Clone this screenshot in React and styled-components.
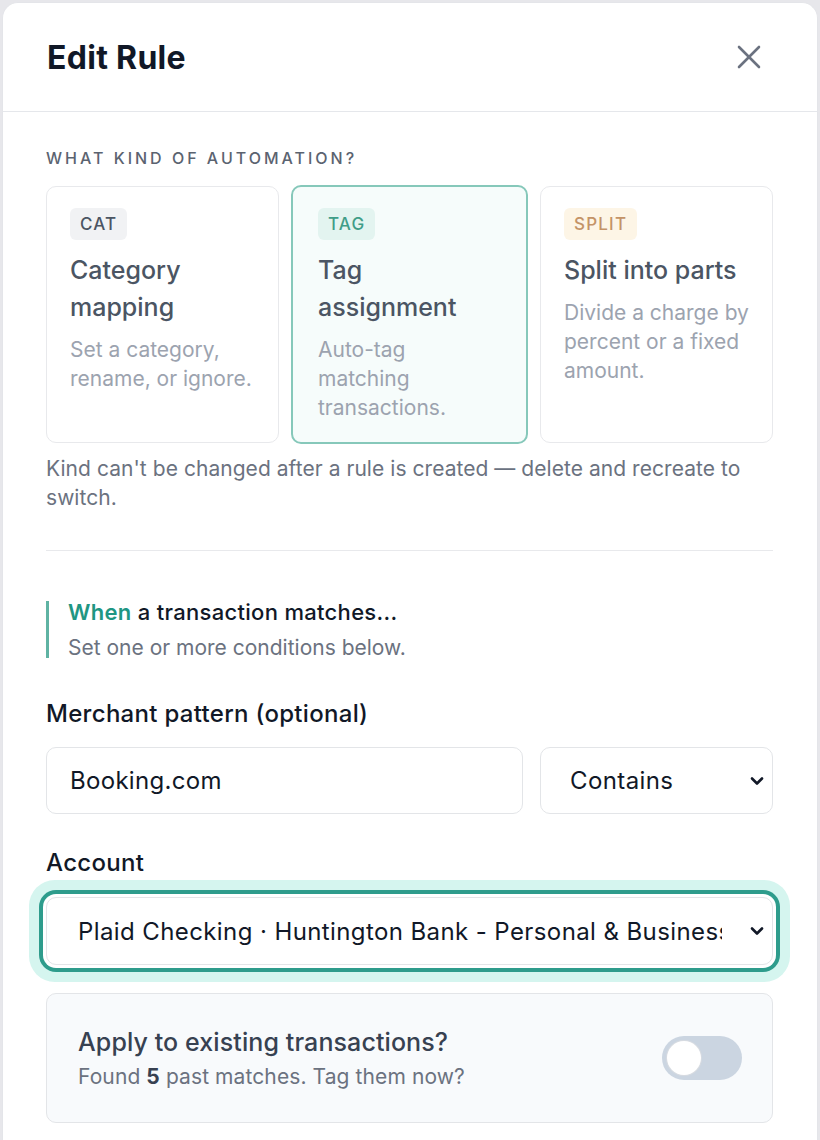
import React from 'react';
import styled, { createGlobalStyle } from 'styled-components';

const GlobalStyle = createGlobalStyle`
  html, body {
    margin: 0;
    padding: 0;
    background: #e7e7eb;
    font-family: Inter, "Noto Sans", Arial, sans-serif;
    -webkit-font-smoothing: antialiased;
  }
  * { box-sizing: border-box; }
`;

const kinds = [
  { code: 'CAT', tone: 'gray', title: 'Category mapping', desc: 'Set a category, rename, or ignore.' },
  { code: 'TAG', tone: 'teal', title: 'Tag assignment', desc: 'Auto-tag matching transactions.', selected: true },
  { code: 'SPLIT', tone: 'amber', title: 'Split into parts', desc: 'Divide a charge by percent or a fixed amount.' },
];

const badgeTones = {
  gray: { bg: '#f1f2f4', fg: '#4b5563' },
  teal: { bg: '#e3f4f0', fg: '#3f9d88' },
  amber: { bg: '#fdf5e6', fg: '#c49367' },
};

const App = () => {
  return (
    <>
      <GlobalStyle />
      <Modal>
        <Header>
          <Title>Edit Rule</Title>
          <CloseButton aria-label="Close">
            <svg width="24" height="24" viewBox="0 0 24 24" fill="none" stroke="#6b7280" strokeWidth="2.6" strokeLinecap="round">
              <line x1="2" y1="2" x2="22" y2="22" />
              <line x1="22" y1="2" x2="2" y2="22" />
            </svg>
          </CloseButton>
        </Header>

        <Body>
          <SectionLabel>What kind of automation?</SectionLabel>
          <KindGrid>
            {kinds.map(k => (
              <KindCard key={k.code} $selected={k.selected}>
                <Badge $tone={k.tone}>{k.code}</Badge>
                <KindTitle>{k.title}</KindTitle>
                <KindDesc>{k.desc}</KindDesc>
              </KindCard>
            ))}
          </KindGrid>
          <Hint>Kind can't be changed after a rule is created — delete and recreate to switch.</Hint>

          <Divider />

          <StepBlock>
            <StepTitle>
              <Accent>When</Accent> a transaction matches...
            </StepTitle>
            <StepSub>Set one or more conditions below.</StepSub>
          </StepBlock>

          <FieldLabel $top={41}>Merchant pattern (optional)</FieldLabel>
          <MerchantRow>
            <TextInput defaultValue="Booking.com" />
            <SelectWrap>
              <Select defaultValue="contains">
                <option value="contains">Contains</option>
                <option value="exact">Exact</option>
              </Select>
              <Chevron />
            </SelectWrap>
          </MerchantRow>

          <FieldLabel $top={34}>Account</FieldLabel>
          <SelectWrap>
            <Select $focused defaultValue="plaid">
              <option value="plaid">Plaid Checking · Huntington Bank - Personal &amp; Business</option>
            </Select>
            <Chevron />
          </SelectWrap>

          <ApplyCard>
            <ApplyText>
              <ApplyTitle>Apply to existing transactions?</ApplyTitle>
              <ApplySub>
                Found <strong>5</strong> past matches. Tag them now?
              </ApplySub>
            </ApplyText>
            <Toggle role="switch" aria-checked="false">
              <Knob />
            </Toggle>
          </ApplyCard>
        </Body>
      </Modal>
    </>
  );
};

const Chevron = () => (
  <ChevronIcon width="14" height="10" viewBox="0 0 14 10" fill="none" stroke="#111827" strokeWidth="2.6" strokeLinecap="round" strokeLinejoin="round">
    <polyline points="2,2.5 7,7.5 12,2.5" />
  </ChevronIcon>
);

const Modal = styled.div`
  margin: 2px 2px 0;
  min-height: 1300px;
  background: #fff;
  border-radius: 16px 16px 0 0;
  border: 1px solid #e4e5e9;
  border-bottom: none;
`;

const Header = styled.header`
  display: flex;
  align-items: center;
  justify-content: space-between;
  height: 109px;
  padding: 0 46px 0 44px;
  border-bottom: 1px solid #e5e7eb;
`;

const Title = styled.h1`
  margin: 0;
  font-size: 32px;
  font-weight: 700;
  color: #111827;
  letter-spacing: 0.3px;
`;

const CloseButton = styled.button`
  display: flex;
  padding: 0;
  margin-right: 10px;
  border: none;
  background: none;
  cursor: pointer;
`;

const Body = styled.div`
  display: flex;
  flex-direction: column;
  padding: 36px 44px 60px 43px;
`;

const SectionLabel = styled.div`
  font-size: 16px;
  line-height: 20px;
  font-weight: 500;
  letter-spacing: 3px;
  text-transform: uppercase;
  color: #5b6370;
`;

const KindGrid = styled.div`
  display: grid;
  grid-template-columns: repeat(3, 1fr);
  gap: 14px;
  margin-top: 18px;
`;

const KindCard = styled.div`
  display: flex;
  flex-direction: column;
  align-items: flex-start;
  min-height: 257px;
  margin: ${p => (p.$selected ? '-1px -2px' : '0')};
  padding: ${p => (p.$selected ? '21px 26px 20px 25px' : '21px 21px 20px 23px')};
  border-radius: 10px;
  border: ${p => (p.$selected ? '2px solid #86c8ba' : '1px solid #e8e9ec')};
  background: ${p => (p.$selected ? '#f6fcfb' : '#fff')};
`;

const Badge = styled.span`
  display: inline-flex;
  align-items: center;
  height: 32px;
  padding: 0 10px;
  border-radius: 6px;
  font-size: 17px;
  font-weight: 500;
  letter-spacing: 1.2px;
  background: ${p => badgeTones[p.$tone].bg};
  color: ${p => badgeTones[p.$tone].fg};
`;

const KindTitle = styled.div`
  margin-top: 12px;
  font-size: 25px;
  line-height: 37px;
  font-weight: 500;
  color: #4b5563;
`;

const KindDesc = styled.div`
  margin-top: 9px;
  font-size: 21px;
  line-height: 29px;
  color: #9ca3af;
`;

const Hint = styled.p`
  margin: 11px 0 0;
  font-size: 21px;
  line-height: 29px;
  letter-spacing: 0.05px;
  color: #6b7280;
`;

const Divider = styled.hr`
  width: 100%;
  margin: 38px 0 0;
  border: none;
  border-top: 1px solid #e8e9ec;
`;

const StepBlock = styled.div`
  margin-top: 50px;
  padding-left: 19px;
  border-left: 3px solid #5fb3a3;
`;

const StepTitle = styled.div`
  font-size: 22px;
  line-height: 22px;
  font-weight: 500;
  letter-spacing: 0.3px;
  color: #111827;
`;

const Accent = styled.span`
  color: #1f9683;
  font-weight: 600;
`;

const StepSub = styled.div`
  margin-top: 15px;
  font-size: 21px;
  line-height: 20px;
  color: #6b7280;
`;

const FieldLabel = styled.label`
  display: block;
  margin-top: ${p => p.$top}px;
  font-size: 24px;
  line-height: 30px;
  font-weight: 500;
  letter-spacing: 0.3px;
  color: #111827;
`;

const MerchantRow = styled.div`
  display: grid;
  grid-template-columns: 1fr 233px;
  gap: 17px;
  margin-top: 18px;
`;

const TextInput = styled.input`
  width: 100%;
  height: 67px;
  padding: 0 23px;
  border: 1px solid #e3e5e8;
  border-radius: 10px;
  font-family: inherit;
  font-size: 24px;
  letter-spacing: 0.3px;
  color: #111827;
  background: #fff;
  outline: none;
`;

const SelectWrap = styled.div`
  position: relative;
  ${FieldLabel} + & {
    margin-top: 19px;
  }
`;

const Select = styled.select`
  appearance: none;
  width: 100%;
  height: ${p => (p.$focused ? '68px' : '67px')};
  padding: ${p => (p.$focused ? '0 50px 0 31px' : '0 50px 0 29px')};
  border: 1px solid #e3e5e8;
  border-radius: 10px;
  font-family: inherit;
  font-size: 24px;
  letter-spacing: 0.4px;
  color: #111827;
  background: #fff;
  outline: none;
  box-shadow: ${p =>
    p.$focused ? '0 0 0 3px #fff, 0 0 0 7px #2e9c8c, 0 0 0 17px #d5f5ef' : 'none'};
`;

const ChevronIcon = styled.svg`
  position: absolute;
  right: 9px;
  top: 50%;
  transform: translateY(-50%);
  pointer-events: none;
`;

const ApplyCard = styled.div`
  display: flex;
  align-items: center;
  justify-content: space-between;
  height: 130px;
  margin-top: 28px;
  padding: 0 30px 0 31px;
  border: 1px solid #e3e5e8;
  border-radius: 10px;
  background: #f8fafc;
`;

const ApplyText = styled.div`
  display: flex;
  flex-direction: column;
  gap: 9px;
`;

const ApplyTitle = styled.div`
  font-size: 25px;
  line-height: 28px;
  font-weight: 500;
  letter-spacing: 0.1px;
  color: #374151;
`;

const ApplySub = styled.div`
  font-size: 21px;
  line-height: 24px;
  letter-spacing: 0.1px;
  color: #6b7280;
  strong {
    color: #374151;
    font-weight: 700;
  }
`;

const Toggle = styled.div`
  display: flex;
  align-items: center;
  width: 80px;
  height: 44px;
  padding: 0 5px;
  border-radius: 22px;
  background: #cbd5e1;
`;

const Knob = styled.span`
  width: 34px;
  height: 34px;
  border-radius: 50%;
  background: #fff;
  box-shadow: 0 0 0 1px #d7dbe1;
`;

export default App;
